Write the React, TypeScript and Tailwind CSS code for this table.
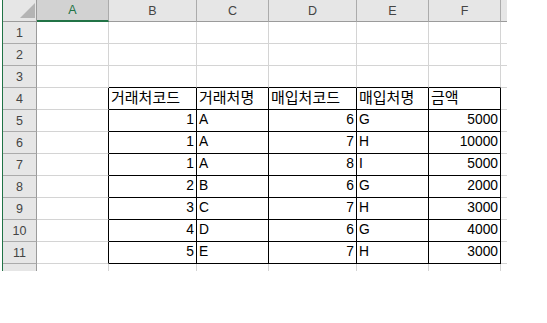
import clsx from 'clsx';

const COLS = ['A', 'B', 'C', 'D', 'E', 'F', ''];

// rows 4..11 hold the table, B..F
const TABLE: (string | number)[][] = [
  ['거래처코드', '거래처명', '매입처코드', '매입처명', '금액'],
  [1, 'A', 6, 'G', 5000],
  [1, 'A', 7, 'H', 10000],
  [1, 'A', 8, 'I', 5000],
  [2, 'B', 6, 'G', 2000],
  [3, 'C', 7, 'H', 3000],
  [4, 'D', 6, 'G', 4000],
  [5, 'E', 7, 'H', 3000],
];

function cellValue(row: number, col: number) {
  if (row < 4 || row > 11 || col < 2 || col > 6) return null;
  return TABLE[row - 4][col - 2];
}

function DataCell({ row, col }: { row: number; col: number }) {
  const last = col === 7;
  const lastRow = row === 12;
  const blackRight = row >= 4 && row <= 11 && col >= 1 && col <= 6;
  const blackBottom = row >= 3 && row <= 11 && col >= 2 && col <= 6;
  const v = cellValue(row, col);
  const isNum = typeof v === 'number';
  const isKo = typeof v === 'string' && v.length > 1;
  return (
    <div
      className={clsx(
        'flex items-end bg-white overflow-hidden',
        !last && 'border-r',
        !lastRow && 'border-b',
        blackRight ? 'border-r-black' : 'border-r-[#d4d4d4]',
        blackBottom ? 'border-b-black' : 'border-b-[#d4d4d4]',
        isNum ? 'justify-end pr-[2px]' : 'justify-start pl-[2px]'
      )}
    >
      {v !== null && (
        <span className={clsx('pb-[2px] leading-[18px] text-black', isKo ? 'text-[15px]' : 'text-[13.8px]')}>
          {v}
        </span>
      )}
    </div>
  );
}

export default function App() {
  const rows = Array.from({ length: 12 }, (_, i) => i + 1);
  return (
    <div
      className="w-[547px] h-[323px] bg-white pl-[2px]"
      style={{ fontFamily: '"Liberation Sans", "Noto Sans CJK KR", sans-serif' }}
    >
      <div className="w-fit border-l border-[#217346] grid grid-cols-[34px_72px_88px_72px_88px_72px_72px_6px] grid-rows-[repeat(12,22px)_7px]">
        {/* corner */}
        <div className="relative bg-[#e6e6e6] border-r border-b border-[#9b9b9b]">
          <svg className="absolute left-[17px] top-[3px]" width="15" height="15" viewBox="0 0 15 15">
            <polygon points="15,0 15,15 0,15" fill="#b4b4b4" />
          </svg>
        </div>
        {/* column headers */}
        {COLS.map((c, i) => (
          <div
            key={c + i}
            className={clsx(
              'flex items-center justify-center text-[12.5px] leading-none pt-[1px]',
              i < 6 && 'border-r border-r-[#ababab]',
              i === 0
                ? 'bg-[#d2d2d2] border-b-2 border-b-[#217346] text-[#217346]'
                : 'bg-[#e6e6e6] border-b border-b-[#9b9b9b] text-[#444444]'
            )}
          >
            {c}
          </div>
        ))}
        {/* body */}
        {rows.map((r) => (
          <div key={r} className="contents">
            <div
              className={clsx(
                'flex items-center justify-center bg-[#e6e6e6] border-r border-r-[#9b9b9b] text-[12.5px] leading-none text-[#444444] pt-[2px]',
                r < 12 && 'border-b border-b-[#ababab]'
              )}
            >
              {r < 12 ? r : ''}
            </div>
            {[1, 2, 3, 4, 5, 6, 7].map((c) => (
              <DataCell key={c} row={r} col={c} />
            ))}
          </div>
        ))}
      </div>
    </div>
  );
}
